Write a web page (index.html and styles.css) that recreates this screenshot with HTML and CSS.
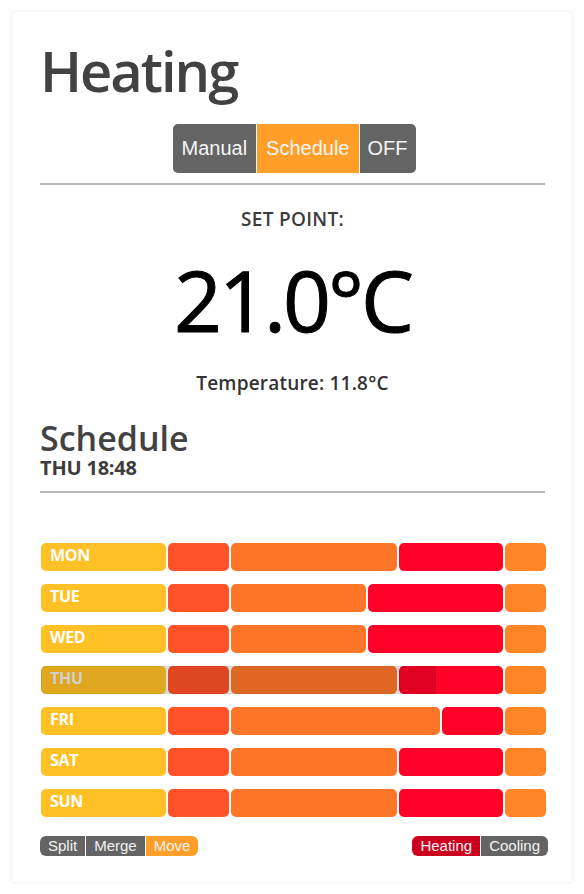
FILE: index.html
```html
<!DOCTYPE html>
<html>
<head>
<meta charset="utf-8">
<link rel="stylesheet" href="styles.css">
</head>
<body>
<div class="page">
  <div class="card">
    <h1 class="title">Heating</h1>
    <div class="modes">
      <div class="mode">Manual</div>
      <div class="mode active">Schedule</div>
      <div class="mode">OFF</div>
    </div>
    <div class="rule rule-top"></div>
    <div class="setlabel">SET POINT:</div>
    <div class="setpoint">21.0°C</div>
    <div class="temp">Temperature: 11.8°C</div>
    <h2 class="subtitle">Schedule</h2>
    <div class="now">THU 18:48</div>
    <div class="rule rule-sched"></div>

    <div class="rows">
      <div class="row">
        <div class="seg c1" style="width:125px"><span class="day">MON</span></div>
        <div class="seg c2" style="width:61px"></div>
        <div class="seg c3" style="width:166px"></div>
        <div class="seg c4" style="width:104px"></div>
        <div class="seg c5" style="width:41px"></div>
      </div>
      <div class="row">
        <div class="seg c1" style="width:125px"><span class="day">TUE</span></div>
        <div class="seg c2" style="width:61px"></div>
        <div class="seg c3" style="width:135px"></div>
        <div class="seg c4" style="width:135px"></div>
        <div class="seg c5" style="width:41px"></div>
      </div>
      <div class="row">
        <div class="seg c1" style="width:125px"><span class="day">WED</span></div>
        <div class="seg c2" style="width:61px"></div>
        <div class="seg c3" style="width:135px"></div>
        <div class="seg c4" style="width:135px"></div>
        <div class="seg c5" style="width:41px"></div>
      </div>
      <div class="row today">
        <div class="seg c1" style="width:125px"><span class="day">THU</span></div>
        <div class="seg c2" style="width:61px"></div>
        <div class="seg c3" style="width:166px"></div>
        <div class="seg c4" style="width:104px"></div>
        <div class="seg c5" style="width:41px"></div>
        <div class="elapsed" style="width:395px"></div>
      </div>
      <div class="row">
        <div class="seg c1" style="width:125px"><span class="day">FRI</span></div>
        <div class="seg c2" style="width:61px"></div>
        <div class="seg c3" style="width:209px"></div>
        <div class="seg c4" style="width:61px"></div>
        <div class="seg c5" style="width:41px"></div>
      </div>
      <div class="row">
        <div class="seg c1" style="width:125px"><span class="day">SAT</span></div>
        <div class="seg c2" style="width:61px"></div>
        <div class="seg c3" style="width:166px"></div>
        <div class="seg c4" style="width:104px"></div>
        <div class="seg c5" style="width:41px"></div>
      </div>
      <div class="row">
        <div class="seg c1" style="width:125px"><span class="day">SUN</span></div>
        <div class="seg c2" style="width:61px"></div>
        <div class="seg c3" style="width:166px"></div>
        <div class="seg c4" style="width:104px"></div>
        <div class="seg c5" style="width:41px"></div>
      </div>
    </div>

    <div class="tools">
      <div class="group">
        <div class="btn">Split</div>
        <div class="btn">Merge</div>
        <div class="btn on">Move</div>
      </div>
      <div class="group group-right">
        <div class="btn heat">Heating</div>
        <div class="btn">Cooling</div>
      </div>
    </div>
  </div>
</div>
</body>
</html>
```

FILE: styles.css
```css
html, body {
  margin: 0;
  padding: 0;
  background: #ffffff;
}

.page {
  padding: 12px;
}

.card {
  width: 560px;
  box-sizing: border-box;
  padding: 26px 27px 26px 28px;
  background: #ffffff;
  box-shadow: 0 0 3px rgba(0, 0, 0, 0.09);
  font-family: "Open Sans", "Noto Sans", sans-serif;
  color: #444444;
}

.title {
  margin: 0;
  font-size: 56px;
  line-height: 64px;
  font-weight: 600;
  color: #424242;
  letter-spacing: -2px;
}

.modes {
  display: flex;
  justify-content: center;
  gap: 1px;
  margin-top: 22px;
  margin-left: 4px;
}

.mode {
  height: 49px;
  line-height: 49px;
  padding: 0 8px;
  background: #646464;
  color: #f6f6f6;
  font-family: "Liberation Sans", Arial, sans-serif;
  font-size: 20px;
}

.mode:first-child {
  border-radius: 5px 0 0 5px;
  padding-right: 9px;
}

.mode:last-child {
  border-radius: 0 5px 5px 0;
}

.mode.active {
  background: #ff9f29;
  padding: 0 9px;
}

.rule {
  height: 2px;
  background: #b8b8b8;
}

.rule-top {
  margin-top: 10px;
}

.setlabel {
  margin-top: 22px;
  text-align: center;
  font-size: 19px;
  line-height: 24px;
  font-weight: 600;
  color: #3c3c3c;
  letter-spacing: 0.3px;
}

.setpoint {
  margin-top: 21px;
  text-align: center;
  font-size: 84px;
  line-height: 96px;
  font-weight: 400;
  color: #000000;
  letter-spacing: -3px;
  -webkit-text-stroke: 1px #000000;
}

.temp {
  margin-top: 23px;
  text-align: center;
  font-size: 19px;
  line-height: 24px;
  font-weight: 600;
  color: #333333;
  letter-spacing: 0.2px;
}

.subtitle {
  margin: 25px 0 0 0;
  font-size: 34px;
  line-height: 36px;
  font-weight: 600;
  color: #424242;
  letter-spacing: 0;
}

.now {
  margin-top: 1px;
  font-size: 20px;
  line-height: 22px;
  font-weight: 700;
  color: #3c3c3c;
  letter-spacing: -0.2px;
}

.rule-sched {
  margin-top: 12px;
}

.rows {
  margin-top: 50px;
  margin-left: 1px;
  display: flex;
  flex-direction: column;
  gap: 13px;
}

.row {
  position: relative;
  display: flex;
  gap: 2px;
  height: 28px;
}

.seg {
  height: 28px;
  border-radius: 5px;
  box-sizing: border-box;
  flex: none;
}

.c1 { background: #ffc125; }
.c2 { background: #ff5228; }
.c3 { background: #ff7628; }
.c4 { background: #ff0029; }
.c5 { background: #ff8627; }

.day {
  display: block;
  padding-left: 9px;
  line-height: 24px;
  font-size: 16px;
  font-weight: 700;
  color: #ffffff;
  letter-spacing: -0.3px;
}

.elapsed {
  position: absolute;
  left: 0;
  top: 0;
  height: 28px;
  background: rgba(0, 0, 0, 0.125);
  border-radius: 5px 0 0 5px;
  box-shadow: inset 0 0 0 1px rgba(0, 0, 0, 0.05);
}

.today .day {
  color: #eeeeee;
}

.tools {
  margin-top: 19px;
  display: flex;
  justify-content: space-between;
}

.group {
  display: flex;
  gap: 1px;
}

.group-right {
  margin-right: -3px;
}

.btn {
  height: 20px;
  line-height: 20px;
  padding: 0 8px;
  background: #646464;
  color: #f2f2f2;
  font-family: "Liberation Sans", Arial, sans-serif;
  font-size: 15px;
}

.btn:first-child {
  border-radius: 6px 0 0 6px;
}

.btn:last-child {
  border-radius: 0 6px 6px 0;
}

.btn.on {
  background: #ff9f29;
}

.btn.heat {
  background: #cb001f;
}
```
